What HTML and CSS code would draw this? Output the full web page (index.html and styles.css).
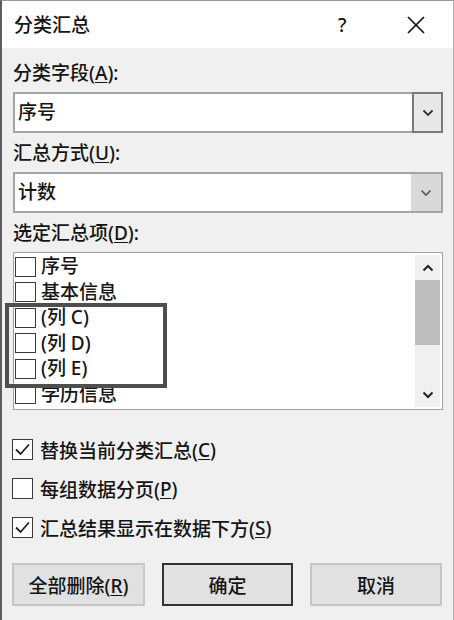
FILE: index.html
```html
<!DOCTYPE html>
<html lang="zh-CN">
<head>
<meta charset="utf-8">
<title>分类汇总</title>
<link rel="stylesheet" href="styles.css">
</head>
<body>
<div class="dialog">
  <div class="titlebar">
    <span class="title">分类汇总</span>
    <span class="help">?</span>
    <span class="close"><svg width="18" height="18" viewBox="0 0 18 18"><path d="M1 1L17 17M17 1L1 17" stroke="#111" stroke-width="1.7" fill="none"/></svg></span>
  </div>
  <div class="body">
    <div class="label">分类字段(<u>A</u>):</div>
    <div class="combo">
      <span class="combo-text">序号</span>
      <span class="combo-btn combo-btn-focus"><svg width="12" height="8" viewBox="0 0 12 8"><polyline points="1.5,1.5 6,6 10.5,1.5" stroke="#333" stroke-width="1.8" fill="none"/></svg></span>
    </div>
    <div class="label">汇总方式(<u>U</u>):</div>
    <div class="combo">
      <span class="combo-text">计数</span>
      <span class="combo-btn combo-btn-plain"><svg width="12" height="8" viewBox="0 0 12 8"><polyline points="1.5,1.5 6,6 10.5,1.5" stroke="#555" stroke-width="1.6" fill="none"/></svg></span>
    </div>
    <div class="label">选定汇总项(<u>D</u>):</div>
    <div class="listbox">
      <div class="items">
        <div class="item"><span class="box"></span>序号</div>
        <div class="item"><span class="box"></span>基本信息</div>
        <div class="item"><span class="box"></span>(列 C)</div>
        <div class="item"><span class="box"></span>(列 D)</div>
        <div class="item"><span class="box"></span>(列 E)</div>
        <div class="item"><span class="box"></span>学历信息</div>
      </div>
      <div class="scrollbar">
        <span class="sb-arrow"><svg width="12" height="8" viewBox="0 0 12 8"><polyline points="1.5,6.5 6,2 10.5,6.5" stroke="#222" stroke-width="2" fill="none"/></svg></span>
        <span class="sb-track"><span class="sb-thumb"></span></span>
        <span class="sb-arrow"><svg width="12" height="8" viewBox="0 0 12 8"><polyline points="1.5,1.5 6,6 10.5,1.5" stroke="#222" stroke-width="2" fill="none"/></svg></span>
      </div>
      <div class="highlight"></div>
    </div>
    <div class="options">
      <div class="opt"><span class="cb"><svg width="21" height="21" viewBox="0 0 21 21"><polyline points="4,10.5 8.5,15 17,5.5" stroke="#222" stroke-width="1.8" fill="none"/></svg></span>替换当前分类汇总(<u>C</u>)</div>
      <div class="opt"><span class="cb"></span>每组数据分页(<u>P</u>)</div>
      <div class="opt"><span class="cb"><svg width="21" height="21" viewBox="0 0 21 21"><polyline points="4,10.5 8.5,15 17,5.5" stroke="#222" stroke-width="1.8" fill="none"/></svg></span>汇总结果显示在数据下方(<u>S</u>)</div>
    </div>
    <div class="buttons">
      <button class="btn">全部删除(<u>R</u>)</button>
      <button class="btn btn-default">确定</button>
      <button class="btn">取消</button>
    </div>
  </div>
</div>
</body>
</html>
```

FILE: styles.css
```css
* { box-sizing: border-box; }
html, body { margin: 0; padding: 0; background: #f0f0f0; }
body {
  font-family: "Noto Sans", "Noto Sans CJK SC", sans-serif;
  font-size: 19px;
  font-weight: 500;
  color: #151515;
}
.dialog {
  width: 454px;
  height: 620px;
  background: #f0f0f0;
  border-left: 2px solid #5e5e5e;
  border-top: 1px solid #9a9a9a;
  border-right: 1px solid #b0b0b0;
}
.titlebar {
  height: 47px;
  background: #fff;
  display: flex;
  align-items: center;
  padding-left: 12px;
}
.title { flex: 1; line-height: 24px; }
.help { width: 14px; margin-right: 55px; margin-left: 2px; font-size: 19px; line-height: 24px; }
.close { width: 18px; height: 18px; margin-right: 28px; display: flex; }
.body { padding: 12px 10px 0 11px; }
.label { height: 26px; line-height: 26px; margin-bottom: 6px; }
u { text-decoration-thickness: 1px; text-underline-offset: 2px; }
.combo {
  height: 41px;
  background: #fff;
  border: 2px solid #a4a4a4;
  display: flex;
  margin-bottom: 7px;
}
.combo-text { flex: 1; line-height: 37px; padding-left: 3px; }
.combo-btn {
  width: 30px;
  display: flex;
  align-items: center;
  justify-content: center;
}
.combo-btn-focus { background: #e8e8e8; border: 2px solid #7a7a7a; margin: -2px -2px -2px 0; width: 31px; }
.combo-btn-plain { background: #d9d9d9; }
.listbox {
  position: relative;
  height: 158px;
  background: #fff;
  border: 1px solid #a0a0a0;
  display: flex;
}
.items { flex: 1; padding-top: 1px; }
.item {
  height: 25.5px;
  display: flex;
  align-items: center;
  padding-left: 1px;
  line-height: 25px;
}
.box {
  width: 21px;
  height: 20px;
  border: 1.5px solid #3a3a3a;
  background: #fff;
  margin-right: 5px;
  flex: none;
}
.scrollbar {
  width: 25px;
  margin: 2px 2px 2px 0;
  background: #f0f0f0;
  display: flex;
  flex-direction: column;
}
.sb-arrow { height: 25px; display: flex; align-items: center; justify-content: center; }
.sb-track { flex: 1; display: flex; flex-direction: column; }
.sb-thumb { height: 65px; margin-top: 0; background: #bdbdbd; }
.highlight {
  position: absolute;
  left: -9px;
  top: 50px;
  width: 162px;
  height: 85px;
  border: 4px solid #4e4e4e;
}
.options { margin-top: 20px; }
.opt { height: 39px; display: flex; align-items: center; }
.cb {
  width: 21px;
  height: 21px;
  border: 1.5px solid #3a3a3a;
  background: #fff;
  margin-left: -1px;
  margin-right: 7px;
  display: flex;
  align-items: center;
  justify-content: center;
  flex: none;
}
.cb svg { margin: -1.5px; }
.buttons {
  margin-top: 16px;
  margin-left: -1px;
  display: grid;
  grid-template-columns: 133px 131px 132px;
  column-gap: 17px;
}
.btn {
  height: 43px;
  font-family: "Noto Sans", "Noto Sans CJK SC", sans-serif;
  font-size: 19px;
  font-weight: 500;
  color: #151515;
  background: #e1e1e1;
  border: 2px solid #c6c6c6;
  padding: 0;
}
.btn-default { border: 2px solid #333; }
```
